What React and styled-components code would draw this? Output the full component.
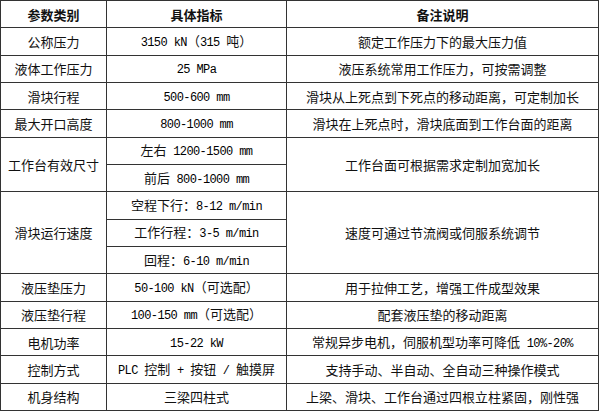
import React from 'react';
import styled, { createGlobalStyle } from 'styled-components';

const GlobalStyle = createGlobalStyle`
  html, body {
    margin: 0;
    padding: 0;
    background: #fff;
  }
  body {
    font-family: "Noto Sans CJK SC", "Noto Sans", sans-serif;
    color: #111;
  }
`;

const rows = [
  { name: '公称压力', values: ['3150 kN（315 吨）'], note: '额定工作压力下的最大压力值' },
  { name: '液体工作压力', values: ['25 MPa'], note: '液压系统常用工作压力，可按需调整' },
  { name: '滑块行程', values: ['500-600 mm'], note: '滑块从上死点到下死点的移动距离，可定制加长' },
  { name: '最大开口高度', values: ['800-1000 mm'], note: '滑块在上死点时，滑块底面到工作台面的距离' },
  { name: '工作台有效尺寸', values: ['左右 1200-1500 mm', '前后 800-1000 mm'], note: '工作台面可根据需求定制加宽加长' },
  { name: '滑块运行速度', values: ['空程下行：8-12 m/min', '工作行程：3-5 m/min', '回程：6-10 m/min'], note: '速度可通过节流阀或伺服系统调节' },
  { name: '液压垫压力', values: ['50-100 kN（可选配）'], note: '用于拉伸工艺，增强工件成型效果' },
  { name: '液压垫行程', values: ['100-150 mm（可选配）'], note: '配套液压垫的移动距离' },
  { name: '电机功率', values: ['15-22 kW'], note: '常规异步电机，伺服机型功率可降低 10%-20%' },
  { name: '控制方式', values: ['PLC 控制 + 按钮 / 触摸屏'], note: '支持手动、半自动、全自动三种操作模式' },
  { name: '机身结构', values: ['三梁四柱式'], note: '上梁、滑块、工作台通过四根立柱紧固，刚性强' },
];

const Table = styled.div`
  display: grid;
  grid-template-columns: 106px 180px 1fr;
  grid-template-rows: repeat(15, 1fr);
  width: 599px;
  height: 411px;
  box-sizing: border-box;
  border-top: 1px solid #333;
  border-left: 1px solid #333;
`;

const Cell = styled.div`
  grid-row: span ${p => p.$span || 1};
  display: flex;
  align-items: center;
  justify-content: center;
  border-right: 1px solid #333;
  border-bottom: 1px solid #333;
  font-size: 13px;
  font-weight: ${p => (p.$head ? 700 : 400)};
  line-height: 1;
  white-space: pre;
  overflow: hidden;
`;

const Label = styled.span`
  display: block;
`;

const Latin = styled.span`
  font-family: "Liberation Mono", monospace;
  font-size: 12px;
  letter-spacing: -0.6px;
  color: #000;
`;

// ascii runs (spaces included) get the narrow mono face, like a SimSun half-width
const Text = ({ children }) => {
  const parts = children.split(/([\x20-\x7e]+)/);
  return (
    <Label>
      {parts.map((p, i) =>
        i % 2 ? <Latin key={i}>{p}</Latin> : <React.Fragment key={i}>{p}</React.Fragment>
      )}
    </Label>
  );
};

const App = () => (
  <>
    <GlobalStyle />
    <Table>
      <Cell $head>参数类别</Cell>
      <Cell $head>具体指标</Cell>
      <Cell $head>备注说明</Cell>
      {rows.map(row => (
        <React.Fragment key={row.name}>
          <Cell $span={row.values.length}>{row.name}</Cell>
          {row.values.map((v, i) => (
            <React.Fragment key={v}>
              <Cell><Text>{v}</Text></Cell>
              {i === 0 && <Cell $span={row.values.length}><Text>{row.note}</Text></Cell>}
            </React.Fragment>
          ))}
        </React.Fragment>
      ))}
    </Table>
  </>
);

export default App;
